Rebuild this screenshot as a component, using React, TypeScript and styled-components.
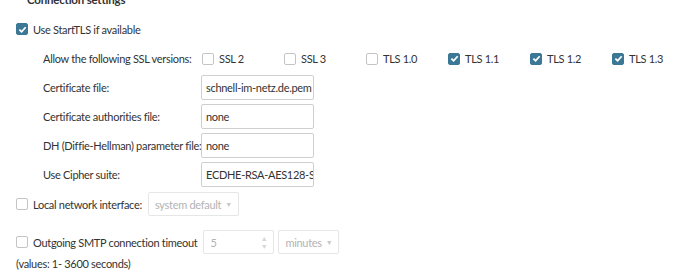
import React from 'react';
import styled, { createGlobalStyle } from 'styled-components';

const GlobalStyle = createGlobalStyle`
  body {
    margin: 0;
    background: #fff;
    font-family: Lato, "Open Sans", sans-serif;
    font-size: 11px;
    letter-spacing: -0.3px;
    color: #333;
  }
`;

const Page = styled.div`
  width: 690px;
  height: 272px;
  overflow: hidden;
`;

const Fieldset = styled.fieldset`
  margin: -7px 0 0 16px;
  padding: 0;
  border: none;
  border-top: 1px solid #e4e4e4;
  min-width: 0;
`;

const Legend = styled.legend`
  margin-left: 6px;
  padding: 0 5px;
  font-weight: 700;
  font-size: 11.5px;
  letter-spacing: -0.2px;
  color: #333;
`;

const Row = styled.div<{ $top?: number; $gap?: number }>`
  display: flex;
  align-items: center;
  gap: ${(p) => p.$gap ?? 4}px;
  margin-top: ${(p) => p.$top ?? 0}px;
  height: 26px;
`;

const Grid = styled.div`
  display: grid;
  grid-template-columns: 158px auto;
  grid-auto-rows: 29px;
  align-items: center;
  margin: 2px 0 0 27px;
`;

const Label = styled.span`
  white-space: nowrap;
`;

const Versions = styled.div`
  display: grid;
  grid-template-columns: repeat(6, 82px);
  margin-left: 1px;
`;

const CheckLabel = styled.label`
  display: inline-flex;
  align-items: center;
  gap: 5px;
  white-space: nowrap;
  cursor: pointer;
`;

const Box = styled.span<{ $checked?: boolean }>`
  box-sizing: border-box;
  width: 12px;
  height: 12px;
  border-radius: 2px;
  border: 1px solid ${(p) => (p.$checked ? '#3a7895' : '#c4c4c4')};
  background: ${(p) => (p.$checked ? '#3a7895' : '#fff')};
  display: inline-flex;
  align-items: center;
  justify-content: center;
  flex-shrink: 0;
`;

const TextInput = styled.div`
  box-sizing: border-box;
  width: 113px;
  height: 25px;
  border: 1px solid #cfcfcf;
  border-radius: 2px;
  padding: 0 4px;
  display: flex;
  align-items: center;
  white-space: nowrap;
  overflow: hidden;
`;

const Select = styled.div<{ $width: number }>`
  box-sizing: border-box;
  width: ${(p) => p.$width}px;
  height: 24px;
  border: 1px solid #e6e6e6;
  border-radius: 2px;
  padding: 0 6px;
  display: flex;
  align-items: center;
  justify-content: space-between;
  color: #b3b3b3;
  white-space: nowrap;
`;

const Caret = styled.span`
  font-size: 7px;
  color: #c8c8c8;
`;

const Spinner = styled.span`
  display: flex;
  flex-direction: column;
  gap: 1px;
  color: #d6d6d6;
  font-size: 7px;
  line-height: 7px;
`;

const Controls = styled.div`
  display: flex;
  gap: 4px;
`;

const Note = styled.div`
  margin-top: 2px;
`;

const Check = ({ checked, children }: { checked?: boolean; children: React.ReactNode }) => (
  <CheckLabel>
    <Box $checked={checked}>
      {checked && (
        <svg width="9" height="9" viewBox="0 0 10 10">
          <path d="M1.5 5.2 L4 7.5 L8.5 2.5" fill="none" stroke="#fff" strokeWidth="2" />
        </svg>
      )}
    </Box>
    {children}
  </CheckLabel>
);

const versions: [string, boolean][] = [
  ['SSL 2', false],
  ['SSL 3', false],
  ['TLS 1.0', false],
  ['TLS 1.1', true],
  ['TLS 1.2', true],
  ['TLS 1.3', true],
];

const files: [string, string][] = [
  ['Certificate file:', 'schnell-im-netz.de.pem'],
  ['Certificate authorities file:', 'none'],
  ['DH (Diffie-Hellman) parameter file:', 'none'],
  ['Use Cipher suite:', 'ECDHE-RSA-AES128-SHA256'],
];

const App: React.FC = () => (
  <Page>
    <GlobalStyle />
    <Fieldset>
      <Legend>Connection settings</Legend>
      <Row $top={10}>
        <Check checked>Use StartTLS if available</Check>
      </Row>
      <Grid>
        <Label>Allow the following SSL versions:</Label>
        <Versions>
          {versions.map(([name, on]) => (
            <Check key={name} checked={on}>
              {name}
            </Check>
          ))}
        </Versions>
        {files.map(([label, value]) => (
          <React.Fragment key={label}>
            <Label>{label}</Label>
            <TextInput>{value}</TextInput>
          </React.Fragment>
        ))}
      </Grid>
      <Row $top={2} $gap={6}>
        <Check>Local network interface:</Check>
        <Select $width={91}>
          system default <Caret>▼</Caret>
        </Select>
      </Row>
      <Row $top={12} $gap={6}>
        <Check>Outgoing SMTP connection timeout</Check>
        <Controls>
          <Select $width={71}>
            5
            <Spinner>
              <span>▲</span>
              <span>▼</span>
            </Spinner>
          </Select>
          <Select $width={61}>
            minutes <Caret>▼</Caret>
          </Select>
        </Controls>
      </Row>
      <Note>(values: 1- 3600 seconds)</Note>
    </Fieldset>
  </Page>
);

export default App;
